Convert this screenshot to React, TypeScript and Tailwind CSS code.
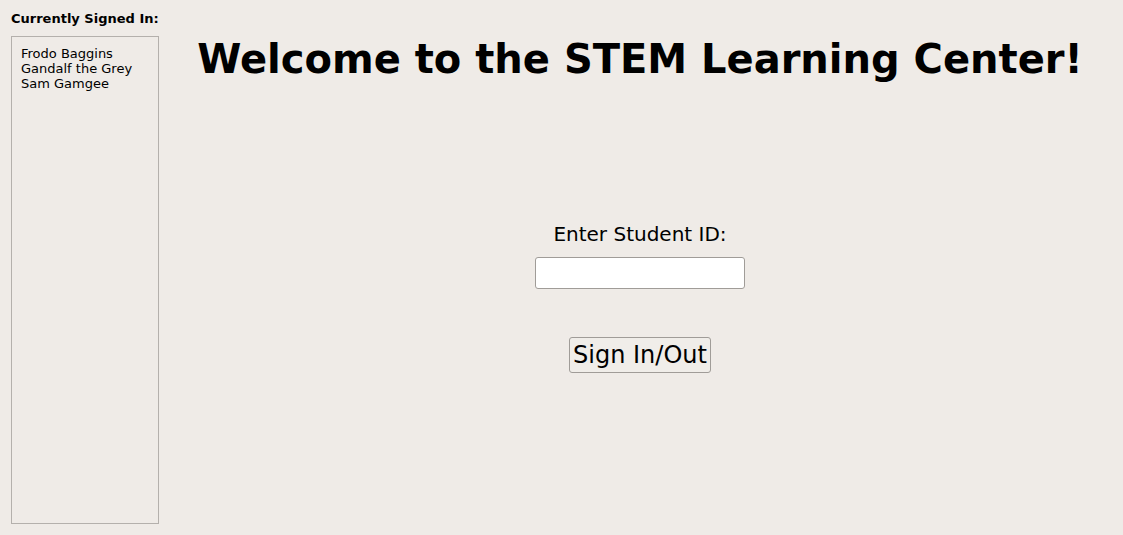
import { useState } from "react";

const signedIn = ["Frodo Baggins", "Gandalf the Grey", "Sam Gamgee"];

export default function App() {
  const [studentId, setStudentId] = useState("");

  return (
    <div className="flex h-[535px] w-full bg-[#efebe7] font-['DejaVu_Sans',sans-serif] text-black">
      {/* Sidebar */}
      <div className="flex w-[159px] shrink-0 flex-col pl-[11px] pt-[11px] pb-[11px]">
        <h2 className="text-[13px] font-bold leading-[15px]">Currently Signed In:</h2>
        <ul className="mt-[10px] flex-1 border border-[#b4b0ac] px-[9px] py-[9px] text-[13px] leading-[15px]">
          {signedIn.map((name) => (
            <li key={name}>{name}</li>
          ))}
        </ul>
      </div>

      {/* Main */}
      <div className="flex flex-1 flex-col items-center pr-[2px]">
        <h1 className="mt-[35px] text-[40px] font-bold leading-[48px]">
          Welcome to the STEM Learning Center!
        </h1>
        <label htmlFor="sid" className="mt-[139px] text-[20px] leading-[24px]">
          Enter Student ID:
        </label>
        <input
          id="sid"
          value={studentId}
          onChange={(e) => setStudentId(e.target.value)}
          className="mt-[11px] h-[32px] w-[210px] rounded-[3px] border border-[#a09c98] bg-white px-2 text-[16px] outline-none"
        />
        <button
          type="button"
          className="mt-[48px] h-[36px] w-[142px] rounded-[3px] border border-[#a09c98] bg-[#f0ede9] text-[24px] leading-[28px]"
        >
          Sign In/Out
        </button>
      </div>
    </div>
  );
}
